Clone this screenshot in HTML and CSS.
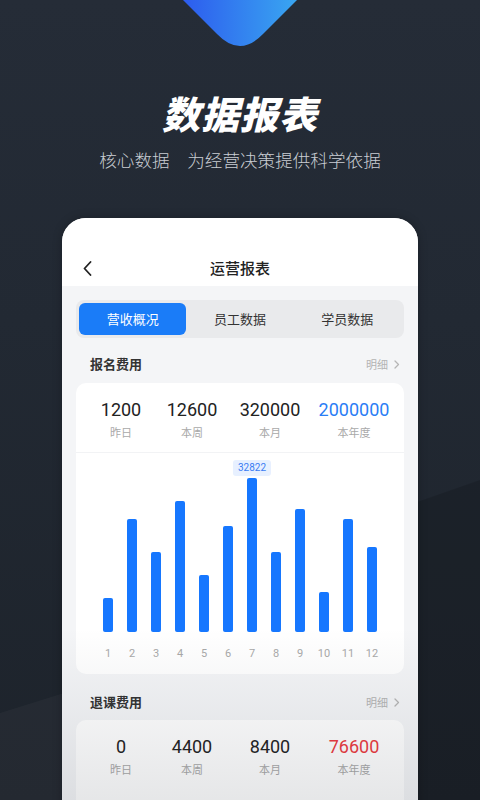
FILE: index.html
```
<!DOCTYPE html>
<html lang="zh-CN">
<head>
<meta charset="utf-8">
<title>数据报表</title>
<link rel="stylesheet" href="styles.css">
</head>
<body>
<div class="page">
  <svg class="deco" width="480" height="60" viewBox="0 0 480 60">
    <defs>
      <linearGradient id="dg" x1="183" y1="0" x2="297" y2="0" gradientUnits="userSpaceOnUse">
        <stop offset="0" stop-color="#2d5cee"/>
        <stop offset="1" stop-color="#39a6f1"/>
      </linearGradient>
    </defs>
    <path d="M183,0 L217,34 Q240,58 263,34 L297,0 Z" fill="url(#dg)"/>
  </svg>

  <header class="hero">
    <h1 class="hero-title">数据报表</h1>
    <p class="hero-sub">核心数据　为经营决策提供科学依据</p>
  </header>

  <div class="phone">
    <div class="nav">
      <span class="back">
        <svg width="9" height="15" viewBox="0 0 9 15"><path d="M7.5,1 L1.5,7.5 L7.5,14" fill="none" stroke="#222" stroke-width="1.8" stroke-linecap="round" stroke-linejoin="round"/></svg>
      </span>
      <span class="nav-title">运营报表</span>
      <span></span>
    </div>

    <div class="content">
      <div class="tabs">
        <div class="tab active">营收概况</div>
        <div class="tab">员工数据</div>
        <div class="tab">学员数据</div>
      </div>

      <div class="sec-head first">
        <span class="sec-title">报名费用</span>
        <span class="more">明细<svg width="6" height="9" viewBox="0 0 6 9"><path d="M1,1 L4.5,4.5 L1,8" fill="none" stroke="#b5b5b5" stroke-width="1.3" stroke-linecap="round" stroke-linejoin="round"/></svg></span>
      </div>

      <div class="card">
        <div class="stats divided">
          <div class="stat"><div class="num">1200</div><div class="lbl">昨日</div></div>
          <div class="stat"><div class="num">12600</div><div class="lbl">本周</div></div>
          <div class="stat"><div class="num">320000</div><div class="lbl">本月</div></div>
          <div class="stat"><div class="num blue">2000000</div><div class="lbl">本年度</div></div>
        </div>
        <div class="chart">
          <div class="col"><div class="bar" style="height:34px"></div><span class="xl">1</span></div>
          <div class="col"><div class="bar" style="height:113px"></div><span class="xl">2</span></div>
          <div class="col"><div class="bar" style="height:80px"></div><span class="xl">3</span></div>
          <div class="col"><div class="bar" style="height:131px"></div><span class="xl">4</span></div>
          <div class="col"><div class="bar" style="height:57px"></div><span class="xl">5</span></div>
          <div class="col"><div class="bar" style="height:106px"></div><span class="xl">6</span></div>
          <div class="col"><div class="bar" style="height:154px"><span class="tip">32822</span></div><span class="xl">7</span></div>
          <div class="col"><div class="bar" style="height:80px"></div><span class="xl">8</span></div>
          <div class="col"><div class="bar" style="height:123px"></div><span class="xl">9</span></div>
          <div class="col"><div class="bar" style="height:40px"></div><span class="xl">10</span></div>
          <div class="col"><div class="bar" style="height:113px"></div><span class="xl">11</span></div>
          <div class="col"><div class="bar" style="height:85px"></div><span class="xl">12</span></div>
        </div>
      </div>

      <div class="sec-head second">
        <span class="sec-title">退课费用</span>
        <span class="more">明细<svg width="6" height="9" viewBox="0 0 6 9"><path d="M1,1 L4.5,4.5 L1,8" fill="none" stroke="#b5b5b5" stroke-width="1.3" stroke-linecap="round" stroke-linejoin="round"/></svg></span>
      </div>

      <div class="card">
        <div class="stats">
          <div class="stat"><div class="num">0</div><div class="lbl">昨日</div></div>
          <div class="stat"><div class="num">4400</div><div class="lbl">本周</div></div>
          <div class="stat"><div class="num">8400</div><div class="lbl">本月</div></div>
          <div class="stat"><div class="num red">76600</div><div class="lbl">本年度</div></div>
        </div>
        <div class="card-rest"></div>
      </div>
    </div>
  </div>
</div>
</body>
</html>
```
FILE: styles.css
```
* { box-sizing: border-box; }

html, body {
  margin: 0;
  padding: 0;
}

body {
  font-family: "Noto Sans CJK SC", "Noto Sans", sans-serif;
  background: #1f252e;
}

.page {
  position: relative;
  width: 480px;
  height: 800px;
  overflow: hidden;
  background: linear-gradient(180deg, #252c37 0%, #222933 40%, #1d232b 100%);
}

.page::before {
  content: "";
  position: absolute;
  inset: 0;
  background: rgba(255,255,255,0.03);
  clip-path: polygon(0 713px, 80px 688px, 80px 800px, 0 800px);
}

.page::after {
  content: "";
  position: absolute;
  inset: 0;
  background: rgba(0,0,0,0.13);
  clip-path: polygon(400px 508px, 480px 480px, 480px 800px, 400px 800px);
}

.deco {
  position: absolute;
  top: 0;
  left: 0;
  display: block;
}

.hero {
  position: relative;
  z-index: 1;
  padding-top: 90px;
  text-align: center;
}

.hero-title {
  margin: 0;
  font-size: 38px;
  line-height: 46px;
  font-weight: 900;
  font-style: italic;
  letter-spacing: 1px;
  color: #ffffff;
}

.hero-sub {
  margin: 12px 0 0;
  font-size: 17.6px;
  line-height: 24px;
  font-weight: 300;
  color: #c9cdd3;
}

.phone {
  position: relative;
  z-index: 1;
  width: 356px;
  height: 600px;
  margin: 46px auto 0;
  background: #f4f5f7;
  border-radius: 24px 24px 0 0;
  overflow: hidden;
  box-shadow: 0 0 10px rgba(0,0,0,0.25);
}

.phone::after {
  content: "";
  position: absolute;
  left: 0;
  right: 0;
  bottom: 0;
  height: 190px;
  background: linear-gradient(180deg, rgba(40,48,60,0) 0%, rgba(40,48,60,0.13) 100%);
  pointer-events: none;
}

.nav {
  height: 68px;
  padding-top: 32px;
  background: #ffffff;
  display: grid;
  grid-template-columns: 1fr auto 1fr;
  align-items: center;
}

.back {
  display: flex;
  align-items: center;
  height: 36px;
  padding-left: 21px;
}

.back svg { display: block; }

.nav-title {
  font-size: 15px;
  line-height: 36px;
  font-weight: 500;
  color: #222222;
}

.content {
  padding: 14px 14px 0;
}

.tabs {
  display: flex;
  height: 38px;
  padding: 3px;
  background: #e9eaec;
  border-radius: 8px;
}

.tab {
  flex: 1;
  text-align: center;
  font-size: 13px;
  line-height: 32px;
  color: #333333;
  border-radius: 6px;
}

.tab.active {
  background: #1a7cf8;
  color: #ffffff;
}

.sec-head {
  display: flex;
  justify-content: space-between;
  align-items: center;
  height: 18px;
  margin-bottom: 9px;
  padding: 0 4px 0 14px;
}

.sec-head.first { margin-top: 17px; margin-bottom: 10px; }
.sec-head.second { margin-top: 19px; }

.sec-title {
  font-size: 13px;
  line-height: 18px;
  font-weight: 700;
  color: #333333;
}

.more {
  display: flex;
  align-items: center;
  gap: 6px;
  font-size: 11px;
  line-height: 18px;
  color: #b3b3b3;
}

.more svg { display: block; }

.card {
  background: #ffffff;
  border-radius: 10px;
}

.stats {
  display: grid;
  grid-template-columns: 70px 72px 84px 84px;
  padding: 16px 8px 13px 10px;
}

.stats.divided {
  border-bottom: 1px solid #f2f3f5;
}

.stat {
  text-align: center;
}

.num {
  font-family: Roboto, "Noto Sans", sans-serif;
  font-size: 18px;
  line-height: 22px;
  font-weight: 400;
  color: #222222;
  white-space: nowrap;
}

.num.blue { color: #2a7df5; }
.num.red { color: #ec3a40; }

.lbl {
  margin-top: 4px;
  font-size: 11px;
  line-height: 14px;
  color: #a9a9a9;
}

.chart {
  display: flex;
  padding: 0 20px 13px;
}

.col {
  flex: 1;
  height: 208px;
  display: flex;
  flex-direction: column;
  align-items: center;
  justify-content: flex-end;
}

.bar {
  position: relative;
  width: 10px;
  background: #1677ff;
  border-radius: 2px;
}

.tip {
  position: absolute;
  bottom: calc(100% + 2px);
  left: 50%;
  transform: translateX(-50%);
  padding: 0 5px;
  height: 16px;
  line-height: 16px;
  font-family: Roboto, "Noto Sans", sans-serif;
  font-size: 10px;
  color: #3a7cf3;
  background: #e7f0ff;
  border-radius: 3px;
  white-space: nowrap;
}

.xl {
  margin-top: 15px;
  font-family: Roboto, "Noto Sans", sans-serif;
  font-size: 11px;
  line-height: 14px;
  color: #a9a9a9;
}

.card-rest {
  height: 60px;
}
```
